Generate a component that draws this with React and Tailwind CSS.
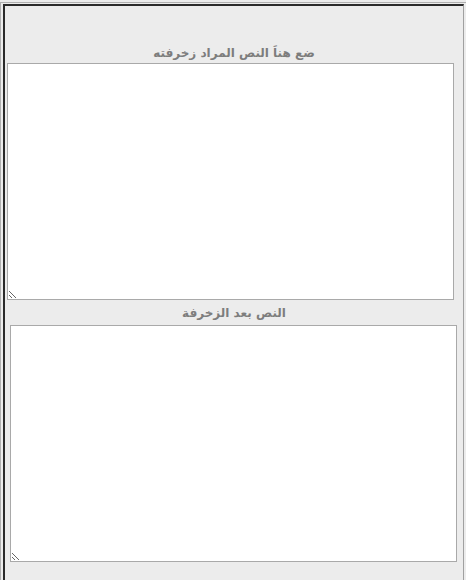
import React from "react";

export default function App() {
  return (
    <div className="w-[466px] h-[580px] bg-[#ececec] overflow-hidden pt-[2px]">
      {/* outer table border */}
      <div className="h-[578px] border-t border-l border-[#b0b0b0] pl-[2px] pt-[1px]">
        <div className="h-full w-[461px] border-t-2 border-l-2 border-r border-t-[#2a2a2a] border-l-[#2a2a2a] border-r-[#a0a0a0] bg-[#ececec]">
          {/* first block */}
          <div className="pt-[36px]">
            <div className="h-[21px] flex items-center justify-center text-[12px] font-bold text-[#7d7d7d] font-['DejaVu_Sans',sans-serif]" dir="rtl">
              ضع هناَ النص المراد زخرفته
            </div>
            <textarea
              dir="rtl"
              className="block ml-[2px] w-[447px] h-[237px] bg-white border border-[#a9a9a9] outline-none"
            />
          </div>

          {/* second block */}
          <div>
            <div className="h-[25px] flex items-center justify-center text-[12px] font-bold text-[#7d7d7d] font-['DejaVu_Sans',sans-serif]" dir="rtl">
              النص بعد الزخرفة
            </div>
            <textarea
              dir="rtl"
              className="block ml-[5px] w-[447px] h-[237px] bg-white border border-[#a9a9a9] outline-none"
            />
          </div>
        </div>
      </div>
    </div>
  );
}
